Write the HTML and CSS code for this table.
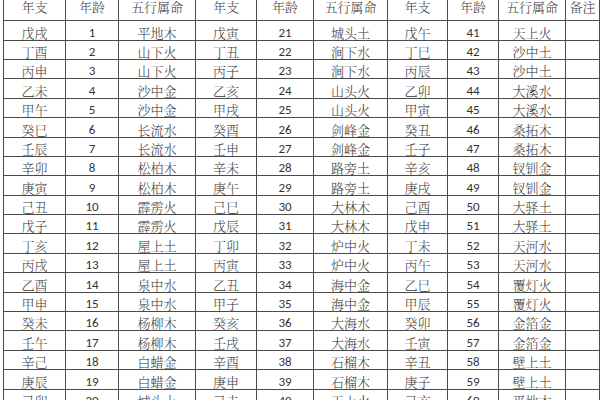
FILE: index.html
```html
<!DOCTYPE html>
<html lang="zh-CN">
<head>
<meta charset="utf-8">
<title>六十甲子纳音表</title>
<link rel="stylesheet" href="styles.css">
</head>
<body>
<table class="sheet">
  <colgroup>
    <col class="c-zhi"><col class="c-age"><col class="c-wx">
    <col class="c-zhi2"><col class="c-age2"><col class="c-wx2">
    <col class="c-zhi3"><col class="c-age3"><col class="c-wx3">
    <col class="c-note">
  </colgroup>
  <thead>
    <tr class="head">
      <th>年支</th><th>年龄</th><th>五行属命</th>
      <th>年支</th><th>年龄</th><th>五行属命</th>
      <th>年支</th><th>年龄</th><th>五行属命</th>
      <th>备注</th>
    </tr>
  </thead>
  <tbody>
    <tr><td>戊戌</td><td class="n">1</td><td>平地木</td><td>戊寅</td><td class="n">21</td><td>城头土</td><td>戊午</td><td class="n">41</td><td>天上火</td><td></td></tr>
    <tr><td>丁酉</td><td class="n">2</td><td>山下火</td><td>丁丑</td><td class="n">22</td><td>涧下水</td><td>丁巳</td><td class="n">42</td><td>沙中土</td><td></td></tr>
    <tr><td>丙申</td><td class="n">3</td><td>山下火</td><td>丙子</td><td class="n">23</td><td>涧下水</td><td>丙辰</td><td class="n">43</td><td>沙中土</td><td></td></tr>
    <tr><td>乙未</td><td class="n">4</td><td>沙中金</td><td>乙亥</td><td class="n">24</td><td>山头火</td><td>乙卯</td><td class="n">44</td><td>大溪水</td><td></td></tr>
    <tr><td>甲午</td><td class="n">5</td><td>沙中金</td><td>甲戌</td><td class="n">25</td><td>山头火</td><td>甲寅</td><td class="n">45</td><td>大溪水</td><td></td></tr>
    <tr><td>癸巳</td><td class="n">6</td><td>长流水</td><td>癸酉</td><td class="n">26</td><td>剑峰金</td><td>癸丑</td><td class="n">46</td><td>桑拓木</td><td></td></tr>
    <tr><td>壬辰</td><td class="n">7</td><td>长流水</td><td>壬申</td><td class="n">27</td><td>剑峰金</td><td>壬子</td><td class="n">47</td><td>桑拓木</td><td></td></tr>
    <tr><td>辛卯</td><td class="n">8</td><td>松柏木</td><td>辛未</td><td class="n">28</td><td>路旁土</td><td>辛亥</td><td class="n">48</td><td>钗钏金</td><td></td></tr>
    <tr><td>庚寅</td><td class="n">9</td><td>松柏木</td><td>庚午</td><td class="n">29</td><td>路旁土</td><td>庚戌</td><td class="n">49</td><td>钗钏金</td><td></td></tr>
    <tr><td>己丑</td><td class="n">10</td><td>霹雳火</td><td>己巳</td><td class="n">30</td><td>大林木</td><td>己酉</td><td class="n">50</td><td>大驿土</td><td></td></tr>
    <tr><td>戊子</td><td class="n">11</td><td>霹雳火</td><td>戊辰</td><td class="n">31</td><td>大林木</td><td>戊申</td><td class="n">51</td><td>大驿土</td><td></td></tr>
    <tr><td>丁亥</td><td class="n">12</td><td>屋上土</td><td>丁卯</td><td class="n">32</td><td>炉中火</td><td>丁未</td><td class="n">52</td><td>天河水</td><td></td></tr>
    <tr><td>丙戌</td><td class="n">13</td><td>屋上土</td><td>丙寅</td><td class="n">33</td><td>炉中火</td><td>丙午</td><td class="n">53</td><td>天河水</td><td></td></tr>
    <tr><td>乙酉</td><td class="n">14</td><td>泉中水</td><td>乙丑</td><td class="n">34</td><td>海中金</td><td>乙巳</td><td class="n">54</td><td>覆灯火</td><td></td></tr>
    <tr><td>甲申</td><td class="n">15</td><td>泉中水</td><td>甲子</td><td class="n">35</td><td>海中金</td><td>甲辰</td><td class="n">55</td><td>覆灯火</td><td></td></tr>
    <tr><td>癸未</td><td class="n">16</td><td>杨柳木</td><td>癸亥</td><td class="n">36</td><td>大海水</td><td>癸卯</td><td class="n">56</td><td>金箔金</td><td></td></tr>
    <tr><td>壬午</td><td class="n">17</td><td>杨柳木</td><td>壬戌</td><td class="n">37</td><td>大海水</td><td>壬寅</td><td class="n">57</td><td>金箔金</td><td></td></tr>
    <tr><td>辛己</td><td class="n">18</td><td>白蜡金</td><td>辛酉</td><td class="n">38</td><td>石榴木</td><td>辛丑</td><td class="n">58</td><td>壁上土</td><td></td></tr>
    <tr><td>庚辰</td><td class="n">19</td><td>白蜡金</td><td>庚申</td><td class="n">39</td><td>石榴木</td><td>庚子</td><td class="n">59</td><td>壁上土</td><td></td></tr>
    <tr><td>己卯</td><td class="n">20</td><td>城头土</td><td>己未</td><td class="n">40</td><td>天上火</td><td>己亥</td><td class="n">60</td><td>平地木</td><td></td></tr>
  </tbody>
</table>
</body>
</html>
```

FILE: styles.css
```css
html, body {
  margin: 0;
  padding: 0;
  background: #ffffff;
  overflow: hidden;
}

.sheet {
  border-collapse: collapse;
  table-layout: fixed;
  width: 596px;
  margin: 0 0 0 3px;
  font-family: "Noto Serif CJK SC", "Noto Sans CJK SC", sans-serif;
  font-size: 13px;
  color: #3a3a3a;
}

.c-zhi { width: 62px; }
.c-age { width: 53px; }
.c-wx { width: 77px; }
.c-zhi2 { width: 61px; }
.c-age2 { width: 57px; }
.c-wx2 { width: 74px; }
.c-zhi3 { width: 60px; }
.c-age3 { width: 51px; }
.c-wx3 { width: 67px; }
.c-note { width: 34px; }

.sheet th,
.sheet td {
  border: 1px solid #4a4a4a;
  padding: 0 0 1px 0;
  text-align: center;
  white-space: nowrap;
  font-weight: 300;
  line-height: 13px;
}

.sheet thead th {
  border-top: 0;
}

.head {
  height: 20.7px;
}

.head th {
  vertical-align: top;
  padding-top: 0;
  line-height: 14px;
}

.sheet tbody tr {
  height: 19.4px;
}

.sheet td {
  vertical-align: bottom;
  overflow: hidden;
}

.sheet td.n {
  font-family: "Carlito", "Lato", "Liberation Sans", sans-serif;
  font-weight: 400;
  font-size: 13px;
  color: #333333;
}
```
